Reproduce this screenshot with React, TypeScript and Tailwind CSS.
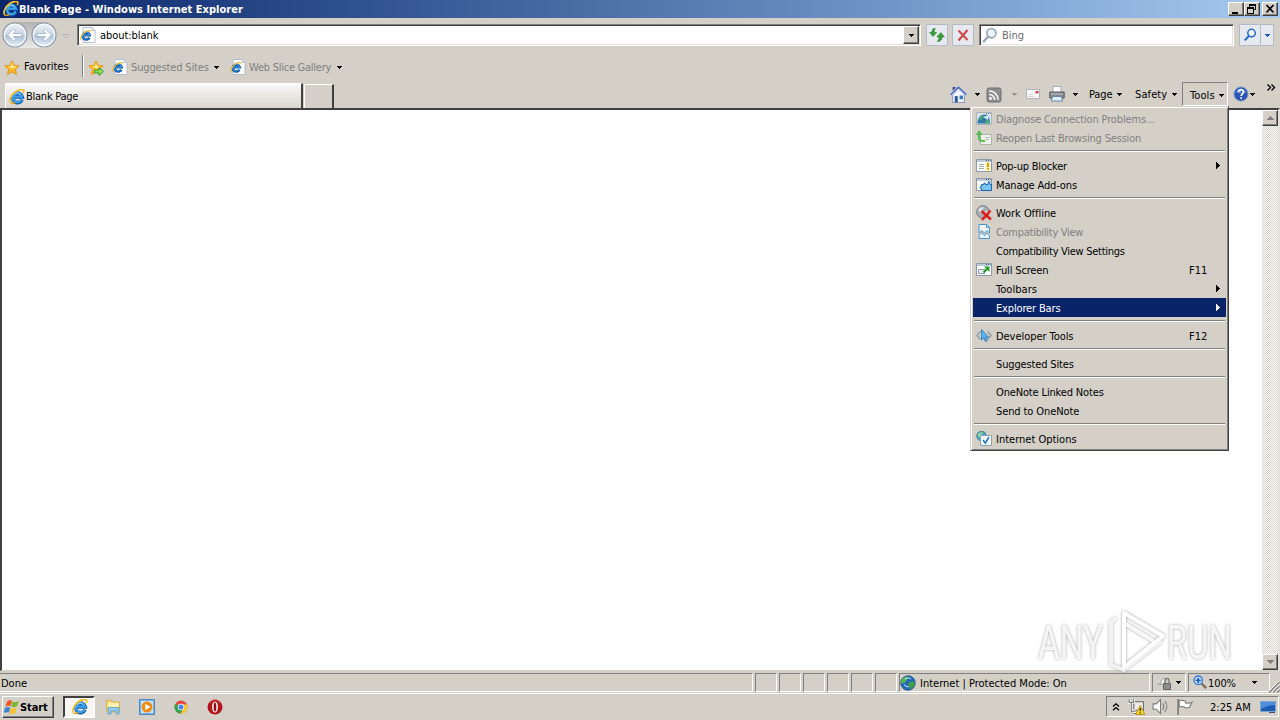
import type { ReactNode } from "react"
import clsx from "clsx"

const sunken = "border border-t-[#808080] border-l-[#808080] border-b-white border-r-white"
const raised =
  "border border-t-white border-l-white border-b-[#404040] border-r-[#404040] shadow-[inset_-1px_-1px_0_#808080] bg-[#d4d0c8]"
const field =
  "border border-t-[#808080] border-l-[#808080] border-b-white border-r-white shadow-[inset_1px_1px_0_#404040,inset_-1px_-1px_0_#e4e1dc] bg-white p-px"

function Svg({ size = 16, box = 16, className, children }: { size?: number; box?: number; className?: string; children: ReactNode }) {
  return (
    <svg width={size} height={size} viewBox={`0 0 ${box} ${box}`} fill="none" className={clsx("shrink-0", className)}>
      {children}
    </svg>
  )
}

function Caret({ className = "text-black" }: { className?: string }) {
  return (
    <svg width="5" height="3" viewBox="0 0 5 3" shapeRendering="crispEdges" className={clsx("shrink-0", className)}>
      <path d="M0 0h5v1H4v1H3v1H2V2H1V1H0z" fill="currentColor" />
    </svg>
  )
}

function IeLogo({ className }: { className?: string }) {
  return (
    <Svg className={className}>
      <path d="M13 10.600A4.700 4.700 0 1 1 13.200 7.900H5" stroke="#1259ad" strokeWidth="3.600" />
      <path d="M12.700 10.300A4.500 4.500 0 1 1 12.900 7.700H5" stroke="#3da2ea" strokeWidth="2.200" />
      <path d="M5.500 5.400c1-1.600 4.600-1.800 5.600.2" stroke="#a5e0fb" strokeWidth=".9" />
      <path d="M2.200 14.300C-.6 12.300 1.800 6 6.400 2.800 10 .2 14.200-.2 14.800 1.600c.2.800-.1 1.700-.6 2.600" stroke="#f0c02c" strokeWidth="1.700" />
      <path d="M2.200 14.300c1 .6 2.600.1 4.200-.9" stroke="#e2a21a" strokeWidth="1.300" />
    </Svg>
  )
}

function IePage({ className }: { className?: string }) {
  return (
    <Svg className={className}>
      <path d="M3 .5h9l3 3v12H3z" fill="#fff" stroke="#b3bdca" />
      <path d="M12 .5v3h3" stroke="#b3bdca" />
      <path d="M9.300 10.600A3.400 3.400 0 1 1 9.600 8.200H4" stroke="#1456a8" strokeWidth="2.700" />
      <path d="M9 10.300A3.300 3.300 0 1 1 9.400 8.100H4" stroke="#3a92dc" strokeWidth="1.200" />
      <path d="M1 12.800C.2 10.500 2.500 6.600 6 4.600c2.400-1.400 4.800-1.500 5 .1" stroke="#e5b92c" strokeWidth="1.200" />
    </Svg>
  )
}

function Star({ add }: { add?: boolean }) {
  return (
    <Svg>
      <path d="M8 .8l2.100 4.500 5.100.6-3.800 3.400 1.100 5.200L8 12l-4.500 2.500 1.100-5.200L.8 5.900l5.100-.6z" fill="#fdb827" stroke="#e0981c" />
      <path d="M8 2.500l1.300 3.700 3.800.4L9 8.500 3 6.600l3.700-.4z" fill="#ffeb8c" />
      {add && <path d="M6.500 10h4.500V7.500l4.500 4-4.500 4V13H6.500z" fill="#8ee05a" stroke="#2b9426" strokeWidth=".9" />}
    </Svg>
  )
}

function NavButton({ back }: { back?: boolean }) {
  return (
    <Svg size={26} box={26}>
      <circle cx="13" cy="13" r="12" fill="url(#navBall)" stroke="#8d98a8" strokeWidth="1.200" />
      <circle cx="13" cy="13" r="10.600" stroke="#f5f9fd" strokeWidth="1.200" />
      <g transform={back ? undefined : "matrix(-1 0 0 1 26 0)"}>
        <path d="M5.500 13l6.300-6.200 2 2-2.600 2.700h8.600v3h-8.600l2.600 2.700-2 2z" fill="#fff" stroke="#a3b7d0" strokeWidth=".9" />
      </g>
      <defs>
        <linearGradient id="navBall" x1="0" y1="0" x2="0" y2="1">
          <stop offset="0" stopColor="#eef2f6" />
          <stop offset=".46" stopColor="#cdd8e4" />
          <stop offset=".54" stopColor="#aebfd5" />
          <stop offset="1" stopColor="#eaf6fd" />
        </linearGradient>
      </defs>
    </Svg>
  )
}

function Magnifier({ color, fill = "#eef6ff", size = 16, className }: { color: string; fill?: string; size?: number; className?: string }) {
  return (
    <Svg size={size} className={className}>
      <circle cx="9.800" cy="5.800" r="4.300" stroke={color} strokeWidth="1.700" fill={fill} />
      <path d="M6.700 9.100L2 14.200" stroke={color} strokeWidth="2.300" />
    </Svg>
  )
}

function Globe() {
  return (
    <Svg>
      <circle cx="8" cy="8" r="7.300" fill="#2467b8" stroke="#24507f" strokeWidth=".8" />
      <path d="M2 4.500C4 1.500 7 1 8.400 2.200 9 4 6.500 4.500 5.600 6.600 4.800 8.600 3 8 1.200 8.600 1 7 1.300 5.600 2 4.500z" fill="#55b94d" />
      <path d="M9 7.500c2-1.500 4.500-1 6 .3-.2 3-1.800 5.300-4.200 6.400C9.600 13 10 11.500 8.800 10.400c-.7-1-.6-2 .2-2.900z" fill="#3f9f45" />
      <path d="M5 4.200c2-1.600 4.500-1.200 6-.2M4 9.500c1.500 2 3.500 2.500 5 2" stroke="#a6dcff" strokeWidth="1.200" />
    </Svg>
  )
}

// little window frame shared by several of the menu icons
function Frame({ children }: { children?: ReactNode }) {
  return (
    <>
      <path d="M.5 1.500h15v12H.5z" fill="#fff" stroke="#8a98a8" />
      <path d="M1 2h14v2H1z" fill="#bccbda" />
      <path d="M10 2.500h1m1 0h1m1 0h.5" stroke="#47637f" />
      {children}
    </>
  )
}

const icons: Record<string, ReactNode> = {
  diagnose: (
    <Svg>
      <path d="M.5 1.500h15v12H.5z" fill="#dbe5ec" stroke="#a3b0b8" />
      <path d="M10 2.500h1m1 0h1m1 0h.5" stroke="#47637f" />
      <path d="M1.500 12.500c0-5 2.500-9 7-9 3.500 0 5.500 3 5.500 9z" fill="#1d6ea5" />
      <path d="M3 9c.5-3 2.500-4.500 5-4.500-.5 2-2.500 2.500-3 5zM9 12.500c0-2 1-4 3.500-4l1 4z" fill="#45ac62" />
      <path d="M7 6l6-2-1 5z" fill="#d5eefa" />
    </Svg>
  ),
  reopen: (
    <Svg>
      <path d="M4.500 4.500h11v10h-11z" fill="#f3f5f2" stroke="#a8b3a7" />
      <path d="M9 9.500h4M9 7.500h5" stroke="#b5c4b2" />
      <path d="M9 11H6.500C3.800 11 3 9 3 6.500V4" stroke="#4abb47" strokeWidth="2.200" />
      <path d="M-.3 5L3.300 0l3.400 5z" fill="#4abb47" />
    </Svg>
  ),
  popup: (
    <Svg>
      <Frame>
        <path d="M3 6.500h5M3 8.500h5M3 10.500h5" stroke="#9faab5" />
        <path d="M9.500 4h5v9h-5z" fill="#fff1a8" />
        <path d="M12 5v4m0 1v1.500" stroke="#ca8b00" strokeWidth="1.600" />
      </Frame>
    </Svg>
  ),
  addons: (
    <Svg>
      <Frame>
        <path d="M5.500 7.500h2.300c-.8-2 2.400-2 1.700 0H12V5.800c0-1.600 2-1.600 2 0v1.700h1.500v6h-10v-2.200c-2 .6-2-2.400 0-1.800z" fill="#7cc4f5" stroke="#1668b5" />
      </Frame>
    </Svg>
  ),
  offline: (
    <Svg>
      <circle cx="7" cy="7" r="6.300" fill="#a9aeb2" stroke="#777d82" />
      <path d="M2 5c2-3 4-3 6-2.500C7 5 5 5 4.500 8zM8 7l4-1v4z" fill="#dfe3e5" />
      <path d="M5.500 6l9.500 8.500M14.500 5.500L6 15" stroke="#df1d1d" strokeWidth="2.500" />
    </Svg>
  ),
  compat: (
    <Svg>
      <path d="M3 .5h7.500l3 3V9L11 6.500 8.500 9 6 6.500 3 9z" fill="#f4faff" stroke="#3f8fd0" />
      <path d="M3 14.500v-3l3-3 2.500 3L11 8.800l2.500 2.700v3z" fill="#e9f5ff" stroke="#3f8fd0" />
      <path d="M10.500.5v3h3" stroke="#3f8fd0" />
    </Svg>
  ),
  fullscreen: (
    <Svg>
      <Frame>
        <path d="M2.500 7.500h6v4h-6z" fill="#e4ebf2" stroke="#8d9bab" />
        <path d="M7.500 10.500L12 6" stroke="#2a9a2a" strokeWidth="2.200" />
        <path d="M8 4.500h5.500V10z" fill="#2a9a2a" />
      </Frame>
    </Svg>
  ),
  dev: (
    <Svg>
      <path d="M4.500 3.500L1 7.500l3.500 4M11.500 3.500l3.500 4-3.500 4" stroke="#8c98a5" strokeWidth="1.300" />
      <path d="M5.500 1.500V12l2.200-2 1.800 3.500 1.700-.9-1.700-3.400h3z" fill="#5cb2ee" stroke="#1d73bd" strokeWidth=".8" />
    </Svg>
  ),
  options: (
    <Svg>
      <circle cx="5.500" cy="5" r="4.800" fill="#45a6c4" stroke="#51838f" />
      <path d="M1.500 4c2-3 4-3 5.500-2.500C6 4 4 4 3.500 7z" fill="#8edc9b" />
      <path d="M4.500 4.500h11v10h-11z" fill="#fafdff" stroke="#8ba0b5" />
      <path d="M7 9l2.300 3L13 6" stroke="#2878c8" strokeWidth="1.600" />
    </Svg>
  ),
}

type Entry = { label: string; w: string; icon?: string; disabled?: boolean; key?: string; sub?: boolean; active?: boolean } | null

// w is the letter spacing that keeps each label at its Tahoma width
const menu: Entry[] = [
  { label: "Diagnose Connection Problems...", w: "tracking-[-0.15px]", icon: "diagnose", disabled: true },
  { label: "Reopen Last Browsing Session", w: "tracking-[-0.18px]", icon: "reopen", disabled: true },
  null,
  { label: "Pop-up Blocker", w: "tracking-[-0.2px]", icon: "popup", sub: true },
  { label: "Manage Add-ons", w: "tracking-[-0.14px]", icon: "addons" },
  null,
  { label: "Work Offline", w: "tracking-[-0.05px]", icon: "offline" },
  { label: "Compatibility View", w: "tracking-[-0.3px]", icon: "compat", disabled: true },
  { label: "Compatibility View Settings", w: "tracking-[-0.28px]" },
  { label: "Full Screen", w: "tracking-[-0.15px]", icon: "fullscreen", key: "F11" },
  { label: "Toolbars", w: "tracking-[0.05px]", sub: true },
  { label: "Explorer Bars", w: "tracking-[-0.15px]", sub: true, active: true },
  null,
  { label: "Developer Tools", w: "tracking-[-0.05px]", icon: "dev", key: "F12" },
  null,
  { label: "Suggested Sites", w: "tracking-[-0.15px]" },
  null,
  { label: "OneNote Linked Notes", w: "tracking-[-0.15px]" },
  { label: "Send to OneNote", w: "tracking-[-0.1px]" },
  null,
  { label: "Internet Options", w: "tracking-normal", icon: "options" },
]

function ToolsMenu() {
  return (
    <div className="absolute left-[970px] top-[106px] z-10 w-[259px] h-[345px] bg-[#d4d0c8] border border-t-[#d4d0c8] border-l-[#d4d0c8] border-b-[#404040] border-r-[#404040] shadow-[inset_1px_1px_0_#fff,inset_-1px_-1px_0_#808080] p-[2px]">
      {menu.map((m, i) =>
        m ? (
          <div key={i} className={clsx("h-[19px] flex items-center pl-[3px] pr-[6px]", m.disabled && "text-[#808080]", m.active && "bg-[#0a246a] text-white")}>
            <div className={clsx("w-5 flex", m.disabled && "opacity-90")}>{m.icon && icons[m.icon]}</div>
            <span className={clsx("flex-1", m.w)}>{m.label}</span>
            {m.key && <span className="w-[31px]">{m.key}</span>}
            {m.sub && (
              <svg width="4" height="7" viewBox="0 0 4 7" shapeRendering="crispEdges" className="mb-px">
                <path d="M0 0h1v1h1v1h1v1h1v1H3v1H2v1H1v1H0z" fill="currentColor" />
              </svg>
            )}
          </div>
        ) : (
          <div key={i} className="h-[9px] pt-[3px] px-px">
            <div className="h-[2px] border-t border-t-[#808080] border-b border-b-white" />
          </div>
        )
      )}
    </div>
  )
}

function TitleBar() {
  return (
    <div className="h-[18px] flex items-center pl-[3px] pr-[2px] bg-linear-to-r from-[#0a246a] to-[#a6caf0]">
      <IeLogo />
      <span className="flex-1 text-white font-bold tracking-[0.03px]">Blank Page - Windows Internet Explorer</span>
      <div className="flex h-[14px]">
        <div className={clsx(raised, "w-4 flex")}>
          <Svg size={14} box={14}><path d="M3 10h6" stroke="#000" strokeWidth="2" /></Svg>
        </div>
        <div className={clsx(raised, "w-4 flex justify-center")}>
          <Svg size={12} box={12}>
            <path d="M3.500 3.500v-2h6v5H8M3.500 2h6M1.500 4.500h6v6h-6zM1.500 5h6" stroke="#000" shapeRendering="crispEdges" />
          </Svg>
        </div>
        <div className={clsx(raised, "w-4 ml-[2px] flex justify-center")}>
          <Svg size={12} box={12}><path d="M2.500 2l7 7.500M9.500 2l-7 7.500" stroke="#000" strokeWidth="1.700" /></Svg>
        </div>
      </div>
    </div>
  )
}

const glass = "border border-[#b3bac6] rounded-[1px] bg-[#e6e9ef] flex items-center justify-center"

function AddressRow() {
  return (
    <div className="h-9 flex items-start pt-[6px]">
      <div className="-mt-[2px] ml-[2px] flex gap-[3px] rounded-full bg-linear-to-b from-[#b4b3b3] to-[#eceae7]">
        <NavButton back />
        <NavButton />
      </div>
      <svg width="8" height="5" viewBox="0 0 8 5" className="mt-[10px] ml-[5px]">
        <path d="M.8.500h6.400L4 4z" fill="#dedbd5" stroke="#b5b1a9" />
      </svg>
      <div className={clsx(field, "ml-[7px] w-[844px] h-[22px] flex items-center")}>
        <IePage className="ml-px" />
        <span className="flex-1 ml-1 tracking-[-0.05px]">about:blank</span>
        <div className={clsx(raised, "w-4 h-[18px] flex items-center justify-center")}>
          <Caret />
        </div>
      </div>
      <div className={clsx(glass, "ml-[5px] w-[22px] h-[22px]")}>
        <Svg>
          <path d="M4.500 1.500h2c-1 1-1.300 2.500-1 4h2.300L4 9.500.5 5.500h2.300c0-1.800.5-3 1.700-4z" fill="#3a9f38" stroke="#1f7b25" strokeWidth=".5" />
          <path d="M10 14.500H8c1.500-1 2-2.500 2-4.500H7.800l4-4.500 3.700 4.500h-2.300c0 2.200-1.200 3.800-3.200 4.500z" fill="#3a9f38" stroke="#1f7b25" strokeWidth=".5" />
        </Svg>
      </div>
      <div className={clsx(glass, "ml-1 w-[22px] h-[22px]")}>
        <Svg><path d="M3.500 3.500l9 9.500M12.500 3l-9 10.500" stroke="#cd4a4c" strokeWidth="2.200" /></Svg>
      </div>
      <div className={clsx(field, "ml-[5px] w-[255px] h-[22px] flex items-center")}>
        <Magnifier color="#9eabbb" size={17} />
        <span className="ml-1 text-[#6d6d6d]">Bing</span>
      </div>
      <div className={clsx(glass, "ml-[5px] w-[22px] h-[22px]")}>
        <Magnifier color="#2569d4" size={14} />
      </div>
      <div className={clsx(glass, "w-[13px] h-[22px] border-l-0")}>
        <Caret className="text-[#1d57b5]" />
      </div>
    </div>
  )
}

function FavoritesBar() {
  return (
    <div className="h-[27px] flex items-center pl-1">
      <Star />
      <div className="w-[58px] ml-1 mb-[2px]">Favorites</div>
      <div className="w-[2px] h-[22px] mb-[3px] border-l border-l-[#808080] border-r border-r-white" />
      <div className="ml-1 flex"><Star add /></div>
      <IePage className="ml-2 mb-px" />
      <div className="w-[83px] ml-[3px] text-[#808080] tracking-[-0.15px] whitespace-nowrap">Suggested Sites</div>
      <Caret />
      <IePage className="ml-[11px] mb-px" />
      <div className="w-[88px] ml-[3px] text-[#808080] tracking-[-0.25px] whitespace-nowrap">Web Slice Gallery</div>
      <Caret />
    </div>
  )
}

function TabRow() {
  return (
    <div className="h-[27px] flex">
      <div className="ml-[5px] mt-[2px] w-[298px] h-[25px] pl-[3px] flex items-center bg-linear-to-b from-[#fbfaf9] to-[#d9d5ce] border-t border-l border-white border-r-2 border-r-[#404040]">
        <IeLogo className="mt-px" />
        <span className="ml-px tracking-[-0.25px]">Blank Page</span>
      </div>
      <div className="ml-px mt-[3px] w-[30px] h-6 border-t border-l border-white border-r-2 border-r-[#404040]" />
      <div className="ml-[615px] flex items-start">
        <div className="h-[26px] flex items-center">
          <Svg size={17} className="ml-[1px]">
            <path d="M2.500 7.500v8h11v-8L8 2.500z" fill="#f1f4fb" stroke="#8d9abb" />
            <path d="M2.500 1h2.800v5H2.500z" fill="#343f87" />
            <path d="M.7 8.300L8 1.200l7.300 7.100" stroke="#c6d0ea" strokeWidth="3" />
            <path d="M.7 8.300L8 1.200l7.300 7.100" stroke="#4a62b8" strokeWidth="1.300" />
            <path d="M4.500 9.500h2.800v6H4.500z" fill="#2f559b" />
            <path d="M9 9h3.200v3.500H9z" fill="#3c7ccb" />
          </Svg>
          <div className="w-[13px] flex justify-end"><Caret /></div>
          <Svg className="ml-[6px] mt-px">
            <rect x="1" y="1" width="14" height="14" rx="2" fill="#8d8d8d" stroke="#6e6e6e" />
            <circle cx="4.500" cy="11.500" r="1.400" fill="#fff" />
            <path d="M3.200 7.500a5 5 0 0 1 5.300 5.300M3.200 4a8.500 8.500 0 0 1 8.800 8.800" stroke="#fff" strokeWidth="1.600" />
          </Svg>
          <Caret className="text-[#99958d] ml-[10px]" />
          <Svg className="ml-2 mb-px">
            <path d="M1.500 3.500h13v9h-13z" fill="#f8f8fb" stroke="#b2b2bd" />
            <path d="M10.500 5h3v2.500h-3z" fill="#d64b55" />
            <path d="M3 8.500h5M3 10.500h6" stroke="#d5d5dd" />
          </Svg>
          <Svg className="ml-2">
            <path d="M4 .5h8V7H4z" fill="#fff" stroke="#a5adb8" />
            <path d="M.8 6h14.400v6H.8z" fill="#858a91" stroke="#565b62" />
            <path d="M2 8h12" stroke="#c2c7cd" />
            <path d="M3.500 10.500h9l1 4.500h-11z" fill="#e4f1fc" stroke="#6b87a5" />
          </Svg>
          <Caret className="ml-2" />
          <span className="w-7 ml-[11px] tracking-[-0.1px]">Page</span>
          <Caret />
          <span className="w-[37px] ml-[13px] tracking-[0.1px]">Safety</span>
          <Caret />
        </div>
        <div className={clsx(sunken, "ml-[5px] mt-px w-[46px] h-6 flex items-center pl-[7px] pt-px")}>
          <span className="w-[29px] tracking-[0.1px]">Tools</span>
          <Caret className="mt-px" />
        </div>
        <div className="h-[26px] flex items-center">
          <Svg className="ml-[5px]">
            <circle cx="8" cy="8" r="7.200" fill="#2a56b7" stroke="#9badc9" />
            <path d="M2.500 6C4 1.800 12 1.800 13.500 6c-3 2-8 2-11 0z" fill="#7096dd" fillOpacity=".6" />
            <path d="M5.500 6.200C5.700 2.800 10.700 3 10.500 6c-.1 1.800-2.300 1.900-2.300 4M8.200 11.300v1.700" stroke="#fff" strokeWidth="1.700" />
          </Svg>
          <Caret className="ml-px" />
          <Svg size={9} box={9} className="ml-3 mb-[13px]">
            <path d="M.5 1.500L3.500 4.500l-3 3M4.500 1.500l3 3-3 3" stroke="#000" strokeWidth="1.400" />
          </Svg>
        </div>
      </div>
    </div>
  )
}

function ScrollButton({ up }: { up?: boolean }) {
  return (
    <div className={clsx(raised, "w-4 h-4 flex items-center justify-center")}>
      <svg width="7" height="4" viewBox="0 0 7 4" shapeRendering="crispEdges" className={clsx("text-[#808080]", up && "rotate-180")}>
        <path d="M0 0h7v1H6v1H5v1H4v1H3V3H2V2H1V1H0z" fill="currentColor" />
      </svg>
    </div>
  )
}

function Content() {
  return (
    <div className="h-[563px] flex bg-white border-t-2 border-l-2 border-[#404040] border-r-2 border-r-[#e4e1dc] border-b border-b-[#d4d0c8]">
      <div className="flex-1" />
      <div className="w-4 flex flex-col justify-between bg-[repeating-conic-gradient(#fff_0_25%,#d4d0c8_0_50%)] bg-size-[2px_2px]">
        <ScrollButton up />
        <ScrollButton />
      </div>
    </div>
  )
}

function StatusBar() {
  return (
    <div className="h-[22px] flex gap-[2px] pt-[2px] items-start">
      <div className={clsx(sunken, "w-[753px] h-[19px] flex items-center border-l-0")}>
        <span className="ml-px">Done</span>
      </div>
      {[0, 1, 2, 3, 4, 5].map((i) => (
        <div key={i} className={clsx(sunken, "w-[22px] h-[19px]")} />
      ))}
      <div className={clsx(sunken, "w-[251px] h-[19px] flex items-center")}>
        <Globe />
        <span className="ml-1">Internet | Protected Mode: On</span>
      </div>
      <div className={clsx(sunken, "w-[34px] h-[19px] flex items-center pl-[3px]")}>
        <Svg className="mr-1">
          <path d="M1 9.500l4-1V6l3-3.500 2 3-2.500 4z" fill="#f2f2f2" stroke="#aaa" />
          <path d="M7.500 8.500h7v6h-7z" fill="#8c8c8c" stroke="#666" />
          <path d="M9 8V5.500a2 2 0 0 1 4 0V8" stroke="#777" strokeWidth="1.300" />
        </Svg>
        <Caret />
      </div>
      <div className={clsx(sunken, "w-[82px] h-[19px] flex items-center pl-1")}>
        <Svg size={14} className="mb-px">
          <circle cx="6" cy="6" r="4.800" fill="#d5eaff" stroke="#3a7bd2" strokeWidth="1.600" />
          <path d="M6 3v6M3 6h6" stroke="#1d60c4" strokeWidth="2" />
          <path d="M10 10l5 5" stroke="#79695a" strokeWidth="2.600" />
        </Svg>
        <span className="ml-px w-[44px] tracking-[-0.1px]">100%</span>
        <Caret />
      </div>
      <Svg size={13} box={13} className="-ml-[5px] mt-[7px]">
        <path d="M1 12L12 1M5 12l7-7M9 12l3-3" stroke="#fff" strokeWidth="1" />
        <path d="M2 12.500L12.500 2M6 12.500L12.500 6M10 12.500l2.500-2.500" stroke="#808080" strokeWidth="1.300" />
      </Svg>
    </div>
  )
}

function Taskbar() {
  return (
    <div className="h-[27px] flex items-start border-t border-white pt-[2px]">
      <div className={clsx(raised, "ml-[2px] w-[52px] h-[22px] flex items-center pl-px")}>
        <Svg>
          <path d="M3 2.500c2-1.600 3.500-1.400 5-.4L6.500 7.300C5 6.500 3.300 6.600 1.300 8z" fill="#ec5a28" />
          <path d="M8.500 2.600c2 1 4 .6 6.500-1.100l-2 5.800c-2 1.200-3.800 1.200-5.700.3z" fill="#79b739" />
          <path d="M1 9c2-1.200 3.700-1.100 5.200-.4l-1.300 5.200c-1.600-.8-3.400-.6-5.300.5z" fill="#3f83d3" />
          <path d="M7 8.800c2 .9 3.800.8 5.700-.3L11.300 14c-2 1.200-3.800 1.200-5.700.3z" fill="#f7c22e" />
        </Svg>
        <span className="font-bold tracking-[-0.1px]">Start</span>
      </div>
      <div className="ml-[9px] w-8 h-[22px] border-2 border-t-[#404040] border-l-[#404040] border-b-white border-r-white bg-[#f7f6f4] flex items-center justify-center">
        <IeLogo className="ml-px" />
      </div>
      <div className="h-[22px] flex items-center gap-[18px] ml-[10px]">
        <Svg>
          <path d="M1.500 1.500h5l1 1.500h7v10h-13z" fill="#f4d87c" stroke="#d9b353" />
          <path d="M3 4h11v4H3z" fill="#fff3b4" />
          <path d="M3 15V8.500h11V15h-3v-3H6v3z" fill="#8fcbef" stroke="#5a9bc9" strokeWidth=".8" />
        </Svg>
        <Svg>
          <path d="M.5.5h15v15H.5z" fill="#79b4e8" stroke="#4d85bf" />
          <path d="M2 2h12v12H2z" fill="#cbe5f8" />
          <circle cx="8" cy="8" r="5.500" fill="#f28a17" />
          <path d="M6.300 4.700L11.500 8l-5.200 3.300z" fill="#fff" />
        </Svg>
        <Svg>
          <circle cx="8" cy="8" r="6.500" fill="#e4483a" />
          <path d="M2.400 4.700A6.500 6.500 0 0 0 7.500 14.500L10.500 9.500 8 8z" fill="#34a350" />
          <path d="M14 5.500A6.500 6.500 0 0 1 7.500 14.500L10.800 9l-.8-3.500z" fill="#fbca2f" />
          <circle cx="8" cy="8" r="3.200" fill="#fff" />
          <circle cx="8" cy="8" r="2.500" fill="#4584ed" />
        </Svg>
        <Svg>
          <circle cx="8" cy="8" r="7.500" fill="#b3151c" />
          <path d="M3 4C5-.2 11-.2 13 4" stroke="#e36565" />
          <ellipse cx="8" cy="8" rx="3" ry="5.500" fill="#f4eded" />
          <ellipse cx="8" cy="8" rx="1.300" ry="4.500" fill="#8c1016" />
        </Svg>
      </div>
      <div className={clsx(sunken, "ml-auto mr-px w-[173px] h-[21px] flex items-center pl-[5px]")}>
        <Svg size={8} box={8}>
          <path d="M1 3.500L4 .8l3 2.700M1 7.200l3-2.700 3 2.700" stroke="#000" strokeWidth="1.300" />
        </Svg>
        <Svg size={17} className="ml-2">
          <path d="M5.500 3.500h9v8h-9z" fill="#ededeb" stroke="#666" />
          <path d="M1 1v3h4V1M3 4v8h4M5 14.500h6" stroke="#fff" strokeWidth="2.500" />
          <path d="M1 1v3h4V1M3 4v8.500h4M5 14.500h6" stroke="#666" />
          <path d="M11.500 7l4.300 8.500H7.200z" fill="#ffdc20" stroke="#b48b00" strokeWidth=".8" />
          <path d="M11.500 9.500v3m0 1v1" stroke="#000" />
        </Svg>
        <Svg size={17} className="ml-[7px]">
          <path d="M1 5.500h3l4-4v13l-4-4H1z" fill="#fff" stroke="#777" />
          <path d="M10 5c1.500 2 1.500 4 0 6M12 3c2.700 3 2.700 7 0 10" stroke="#777" />
        </Svg>
        <Svg size={17} className="ml-[7px]">
          <path d="M2 1v15" stroke="#777" strokeWidth="1.500" />
          <path d="M3 2.500c3-1 4 .5 6 .5v1.500c2 1 4 .5 6-.5l-2.500 5c-2 .8-3.500.5-5-.5-1.500-.8-3-.5-4.500 0z" fill="#fff" stroke="#777" />
        </Svg>
        <span className="w-[50px] ml-[17px] whitespace-nowrap">2:25 AM</span>
        <Svg>
          <path d="M.5 2.500h15v10H.5z" fill="#1d5cb0" stroke="#82a5d0" />
          <path d="M1 3h14v3C9 6 5 8 1 10z" fill="#4f8eda" />
          <path d="M9 13.500h6" stroke="#444f61" />
        </Svg>
      </div>
    </div>
  )
}

function Watermark() {
  return (
    <svg width="230" height="76" viewBox="0 0 230 76" className="absolute left-[1030px] top-[602px] z-20 overflow-visible drop-shadow-[0_0_1.5px_#9a9a9a]">
      <g fill="#fff" fillOpacity=".85" fontFamily="Roboto, sans-serif" fontSize="49" fontWeight="400">
        <text x="8" y="57" textLength="65" lengthAdjust="spacingAndGlyphs">ANY</text>
        <text x="137" y="57" textLength="65" lengthAdjust="spacingAndGlyphs">RUN</text>
      </g>
      <g fill="none" stroke="#fff" strokeWidth="4" strokeLinejoin="round" strokeLinecap="round">
        <path d="M94 11l39 23-39 31z" />
        <path d="M85 17l-4 3v43l13 5 36-28" strokeOpacity=".8" />
        <path d="M94 21l28 17" strokeOpacity=".9" />
      </g>
    </svg>
  )
}

export default function App() {
  return (
    <div className="relative w-[1280px] h-[720px] overflow-hidden bg-[#d4d0c8] text-black text-[11px] leading-[14px] font-['DejaVu_Sans_Condensed','DejaVu_Sans',sans-serif] font-normal flex flex-col cursor-default select-none [&_span]:pt-[2px]">
      <TitleBar />
      <AddressRow />
      <FavoritesBar />
      <TabRow />
      <Content />
      <StatusBar />
      <Taskbar />
      <ToolsMenu />
      <Watermark />
    </div>
  )
}
